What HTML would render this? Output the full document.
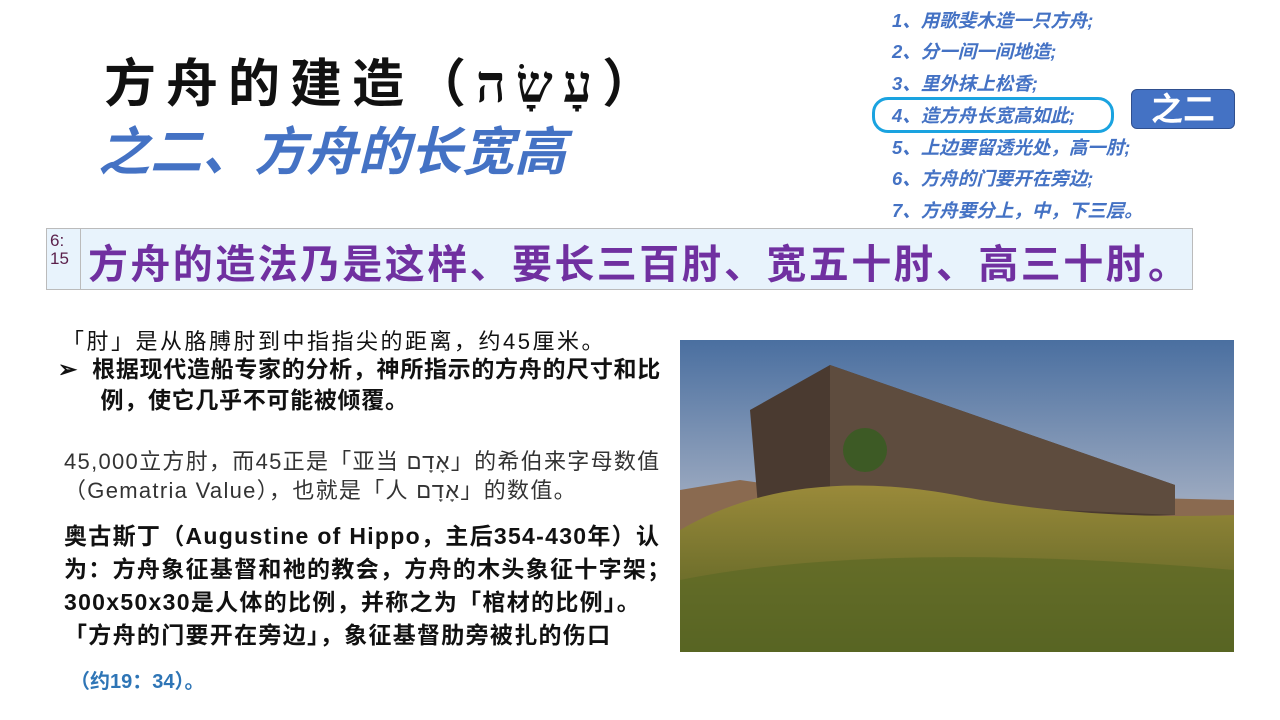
<!DOCTYPE html>
<html><head><meta charset="utf-8"><style>
body{margin:0;width:1280px;height:720px;background:#fff;position:relative;overflow:hidden;font-family:"Liberation Sans","Noto Sans CJK SC",sans-serif}
.a{position:absolute;white-space:nowrap}
.r{font-style:italic;font-weight:bold;color:#4472C4;font-size:18.5px;left:892px}
</style></head><body>
<div class="a" style="left:104px;top:42px;font-size:52px;font-weight:bold;font-family:'Noto Sans CJK SC','Liberation Serif',serif;letter-spacing:10px;color:#111">方舟的建造（עָשָׂה）</div>
<div class="a" style="left:98px;top:110px;font-size:52px;font-weight:bold;font-style:italic;color:#4472C4">之二、方舟的长宽高</div>
<div class="a r" style="top:7px">1、用歌斐木造一只方舟;</div>
<div class="a r" style="top:38px">2、分一间一间地造;</div>
<div class="a r" style="top:70px">3、里外抹上松香;</div>
<div class="a r" style="top:102px">4、造方舟长宽高如此;</div>
<div class="a r" style="top:134px">5、上边要留透光处，高一肘;</div>
<div class="a r" style="top:165px">6、方舟的门要开在旁边;</div>
<div class="a r" style="top:197px">7、方舟要分上，中，下三层。</div>
<div class="a" style="left:872px;top:97px;width:236px;height:30px;border:3px solid #1AA3E0;border-radius:16px"></div>
<div class="a" style="left:1131px;top:89px;width:102px;height:38px;background:#4472C4;border:1px solid #2f4f8f;border-radius:6px;color:#fff;font-weight:bold;font-size:32px;text-align:center;line-height:38px">之二</div>
<div class="a" style="left:46px;top:228px;width:1145px;height:60px;background:#e8f3fc;border:1px solid #bbb"></div>
<div class="a" style="left:80px;top:229px;width:1px;height:60px;background:#bbb"></div>
<div class="a" style="left:50px;top:232px;font-size:17px;line-height:18px;color:#5a1f4a">6:<br>15</div>
<div class="a" style="left:88px;top:232px;font-size:40px;font-weight:bold;letter-spacing:2.4px;color:#7030A0">方舟的造法乃是这样、要长三百肘、宽五十肘、高三十肘。</div>
<div class="a" style="left:62px;top:324px;font-size:22px;letter-spacing:2.5px;color:#111">「肘」是从胳膊肘到中指指尖的距离，约45厘米。</div>
<div class="a" style="left:58px;top:354px;font-size:23px;letter-spacing:0.7px;font-weight:bold;color:#111;line-height:31px">➢&nbsp; 根据现代造船专家的分析，神所指示的方舟的尺寸和比<br>&nbsp;&nbsp;&nbsp;&nbsp;&nbsp;&nbsp;例，使它几乎不可能被倾覆。</div>
<div class="a" style="left:64px;top:447px;font-size:22px;letter-spacing:1.3px;color:#333;line-height:29px">45,000立方肘，而45正是「亚当 אָדָם」的希伯来字母数值<br>（Gematria Value），也就是「人 אָדָם」的数值。</div>
<div class="a" style="left:64px;top:520px;font-size:23px;letter-spacing:1.3px;font-weight:bold;color:#111;line-height:33px">奥古斯丁（Augustine of Hippo，主后354-430年）认<br>为：方舟象征基督和祂的教会，方舟的木头象征十字架；<br>300x50x30是人体的比例，并称之为「棺材的比例」。<br>「方舟的门要开在旁边」，象征基督肋旁被扎的伤口</div>
<div class="a" style="left:70px;top:665px;font-size:20px;font-weight:bold;color:#2E75B6">（约19：34）。</div>
<svg class="a" style="left:680px;top:340px" width="554" height="312" viewBox="0 0 554 312">
<defs><linearGradient id="s" x1="0" y1="0" x2="0" y2="1"><stop offset="0" stop-color="#4a6fa0"/><stop offset="0.5" stop-color="#9aa8bf"/><stop offset="0.8" stop-color="#d8b890"/></linearGradient>
<linearGradient id="g" x1="0" y1="0" x2="0" y2="1"><stop offset="0" stop-color="#9a8a3a"/><stop offset="1" stop-color="#4d5a20"/></linearGradient></defs>
<rect width="554" height="312" fill="url(#s)"/>
<path d="M0 150 L60 140 L130 150 L554 160 L554 200 L0 200Z" fill="#8a6a50"/>
<path d="M70 70 L150 25 L495 145 L495 175 L80 190Z" fill="#4a3a30"/>
<path d="M150 25 L495 145 L495 175 L150 160Z" fill="#5e4c3e"/>
<path d="M0 190 Q120 120 300 160 Q420 180 554 175 L554 312 L0 312Z" fill="url(#g)"/>
<path d="M0 240 Q200 200 554 230 L554 312 L0 312Z" fill="#5c6a25" opacity=".7"/>
<circle cx="185" cy="110" r="22" fill="#3d5a25"/>
</svg>
</body></html>
